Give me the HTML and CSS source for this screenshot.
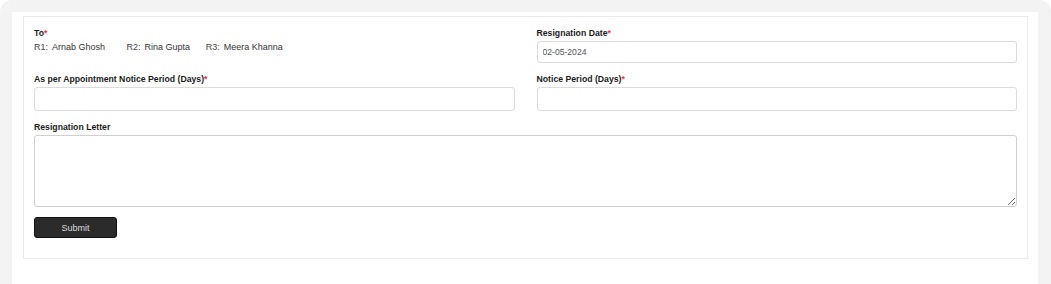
FILE: index.html
```html
<!DOCTYPE html>
<html lang="en">
<head>
<meta charset="UTF-8">
<meta name="viewport" content="width=device-width, initial-scale=1.0">
<title>Resignation</title>
<link rel="stylesheet" href="styles.css">
</head>
<body>
<div class="frame">
  <div class="page">
    <form class="card">
      <div class="row">
        <div class="field">
          <label>To<span class="req">*</span></label>
          <div class="managers">
            <span class="mgr"><span class="tag">R1:</span>Arnab Ghosh</span>
            <span class="mgr mgr-2"><span class="tag">R2:</span>Rina Gupta</span>
            <span class="mgr"><span class="tag">R3:</span>Meera Khanna</span>
          </div>
        </div>
        <div class="field">
          <label>Resignation Date<span class="req">*</span></label>
          <input type="text" class="small" value="02-05-2024">
        </div>
      </div>
      <div class="row">
        <div class="field">
          <label>As per Appointment Notice Period (Days)<span class="req">*</span></label>
          <input type="text">
        </div>
        <div class="field">
          <label>Notice Period (Days)<span class="req">*</span></label>
          <input type="text">
        </div>
      </div>
      <div class="field">
        <label>Resignation Letter</label>
        <textarea></textarea>
      </div>
      <button type="button">Submit</button>
    </form>
  </div>
</div>
</body>
</html>
```

FILE: styles.css
```css
body {
  margin: 0;
  background-color: #fff;
  font-family: "Liberation Sans", Arial, sans-serif;
  color: #222;
}
.frame {
  height: 284px;
  box-sizing: border-box;
  padding: 12px 13px 0 12px;
  background-color: #f3f3f3;
  border-radius: 12px 12px 0 0;
}
.page {
  height: 100%;
  box-sizing: border-box;
  padding: 4px 10px 0 11px;
  background-color: #fff;
}
.card {
  background-color: #fff;
  border: 1px solid #ebebeb;
  padding: 11px 10px 20px 10px;
}
.row {
  display: grid;
  grid-template-columns: 1fr 1fr;
  column-gap: 22px;
}
.field {
  margin-bottom: 11px;
}
label {
  display: block;
  font-size: 8.7px;
  font-weight: bold;
  line-height: 11px;
  margin-bottom: 2px;
  color: #1a1a1a;
}
.req {
  color: #e53935;
}
.managers {
  font-size: 9px;
  line-height: 11px;
  margin-top: 3px;
  color: #333;
}
.mgr {
  margin-right: 19px;
}
.mgr-2 {
  margin-right: 13px;
}
.tag {
  margin-right: 4px;
  color: #444;
}
input, textarea {
  display: block;
  width: 100%;
  box-sizing: border-box;
  border: 1px solid #dcdcdc;
  border-radius: 3px;
  font-family: "Liberation Sans", Arial, sans-serif;
  font-size: 8.6px;
  color: #555;
  padding: 0 5px;
  background-color: #fff;
  margin: 0;
}
input {
  height: 24px;
}
input.small {
  height: 22px;
}
textarea {
  height: 72px;
  resize: vertical;
  border-color: #cfcfcf;
}
button {
  display: block;
  width: 83px;
  height: 21px;
  margin-top: -1px;
  background-color: #2b2b2b;
  border: 1px solid #111;
  border-radius: 3px;
  color: #ddd;
  font-family: "Liberation Sans", Arial, sans-serif;
  font-size: 9px;
  cursor: pointer;
}
```
